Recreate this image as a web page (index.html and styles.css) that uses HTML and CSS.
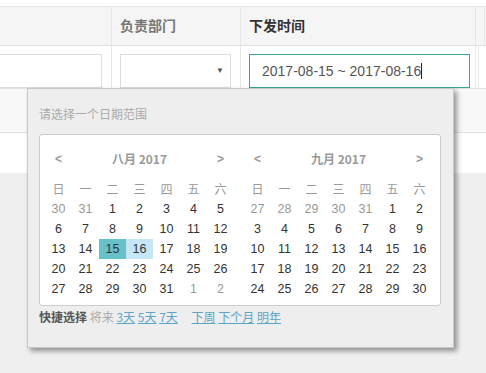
FILE: index.html
```html
<!DOCTYPE html>
<html lang="zh">
  <head>
    <meta charset="UTF-8" />
    <meta name="viewport" content="width=device-width, initial-scale=1.0" />
    <title>下发时间</title>
    <link rel="stylesheet" href="styles.css">
  </head>
  <body>
    <div id="table">
      <div class="row head">
        <div class="cell c1"></div>
        <div class="cell c2">负责部门</div>
        <div class="cell c3 dark">下发时间</div>
        <div class="cell c4"></div>
        <div class="cell c5"></div>
      </div>
      <div class="row filters">
        <div class="cell c1"><div class="text-input"></div></div>
        <div class="cell c2"><div class="select"><span class="caret">▼</span></div></div>
        <div class="cell c3"><div class="date-input">2017-08-15 ~ 2017-08-16<span class="cursor"></span></div></div>
        <div class="cell c4"></div>
        <div class="cell c5"></div>
      </div>
      <div class="row stripe"></div>
      <div class="row blank"></div>
    </div>

    <div id="picker">
      <div class="hint">请选择一个日期范围</div>
      <div class="calendars">
        <div class="month" id="aug"></div>
        <div class="month" id="sep"></div>
      </div>
      <div class="quick">
        <b>快捷选择</b> <span class="muted">将来</span>
        <a>3天</a> <a>5天</a> <a>7天</a>
        <span class="later"><a>下周</a> <a>下个月</a> <a>明年</a></span>
      </div>
    </div>

    <script>
      const weekdays = ["日", "一", "二", "三", "四", "五", "六"];

      function buildMonth(el, title, days) {
        let html = `<div class="m-head"><span>&lt;</span><span class="m-title">${title}</span><span>&gt;</span></div>`;
        html += `<div class="week">${weekdays.map((d) => `<span>${d}</span>`).join("")}</div>`;
        html += `<div class="days">`;
        days.forEach((d) => {
          html += `<span class="${d.cls || ""}">${d.n}</span>`;
        });
        html += `</div>`;
        el.innerHTML = html;
      }

      function range(a, b, cls) {
        const out = [];
        for (let i = a; i <= b; i++) out.push({ n: i, cls });
        return out;
      }

      const aug = [...range(30, 31, "off"), ...range(1, 31), ...range(1, 2, "off")];
      aug[16].cls = "start";
      aug[17].cls = "in";
      buildMonth(document.getElementById("aug"), "八月 2017", aug);

      const sep = [...range(27, 31, "off"), ...range(1, 30)];
      buildMonth(document.getElementById("sep"), "九月 2017", sep);
    </script>
  </body>
</html>
```

FILE: styles.css
```css
* {
  margin: 0;
  padding: 0;
  box-sizing: border-box;
}
body {
  background-color: #efefef;
  font-family: "Liberation Sans", "Noto Sans CJK SC", Arial, sans-serif;
  width: 486px;
  height: 373px;
  overflow: hidden;
  position: relative;
}
#table {
  background-color: white;
  padding-top: 6px;
}
.row {
  display: grid;
  grid-template-columns: 112px 129px 235px 3px 7px;
}
.cell {
  border-right: 1px solid #e6e6e6;
}
.cell.c5 {
  border-right: none;
}
.head {
  height: 40px;
  background-color: #f5f5f5;
  border-top: 1px solid #e6e6e6;
  border-bottom: 1px solid #e2e2e2;
}
.head .cell {
  padding-left: 8px;
  font-size: 14px;
  font-weight: bold;
  line-height: 37px;
  color: #777;
  font-family: "Noto Sans CJK SC", sans-serif;
}
.head .cell.dark {
  color: #333;
}
.filters {
  height: 43px;
  padding-top: 0;
  border-bottom: 1px solid #e2e2e2;
}
.filters .cell {
  padding-top: 8px;
}
.text-input {
  height: 34px;
  margin-right: 9px;
  border: 1px solid #dcdcdc;
  border-left: none;
  background: white;
}
.select {
  height: 34px;
  margin: 0 9px 0 8px;
  border: 1px solid #dcdcdc;
  background: white;
  position: relative;
}
.caret {
  position: absolute;
  right: 6px;
  top: 11px;
  font-size: 8px;
  color: #555;
}
.date-input {
  height: 34px;
  margin: 0 5px 0 8px;
  border: 1px solid #3aa594;
  background: white;
  padding-left: 12px;
  font-size: 14px;
  line-height: 32px;
  color: #555;
  display: flex;
  align-items: center;
}
.cursor {
  display: inline-block;
  width: 1px;
  height: 16px;
  background: #222;
}
.stripe {
  height: 44px;
  background-color: #f8f8f8;
  border-bottom: 1px solid #e2e2e2;
}
.blank {
  height: 40px;
  background-color: white;
}
#picker {
  position: absolute;
  left: 27px;
  top: 88px;
  width: 427px;
  height: 260px;
  background-color: #eeeeee;
  border: 1px solid #c8c8c8;
  box-shadow: 3px 3px 5px rgba(0, 0, 0, 0.4);
  padding: 17px 0 0 11px;
  font-size: 12px;
}
.hint {
  line-height: 16px;
  color: #aaa;
  font-family: "Noto Sans CJK SC", sans-serif;
}
.calendars {
  margin-top: 12px;
  width: 402px;
  height: 172px;
  background: white;
  border: 1px solid #cccccc;
  border-radius: 3px;
  padding: 14px 0 0 5px;
  display: flex;
  gap: 10px;
}
.month {
  width: 189px;
}
.m-head {
  display: flex;
  justify-content: space-between;
  height: 20px;
  line-height: 20px;
  padding: 0 10px;
  color: #999;
  font-weight: bold;
}
.m-title {
  font-family: "Noto Sans CJK SC", sans-serif;
  font-size: 12px;
}
.week,
.days {
  display: grid;
  grid-template-columns: repeat(7, 27px);
  text-align: center;
}
.week {
  margin-top: 10px;
  height: 20px;
  line-height: 20px;
  color: #999;
  font-family: "Noto Sans CJK SC", sans-serif;
}
.days span {
  height: 20px;
  line-height: 20px;
  color: #333;
  font-size: 12.5px;
}
.days span.off {
  color: #999;
}
.days span.start {
  background-color: #67c1c8;
}
.days span.in {
  background-color: #c5e7f5;
}
.quick {
  margin-top: 3px;
  line-height: 16px;
  color: #555;
  font-family: "Noto Sans CJK SC", sans-serif;
}
.quick b {
  font-weight: bold;
}
.muted {
  color: #aaa;
}
.quick a {
  color: #5aa5c8;
  text-decoration: underline;
}
.later {
  margin-left: 11px;
}
```
